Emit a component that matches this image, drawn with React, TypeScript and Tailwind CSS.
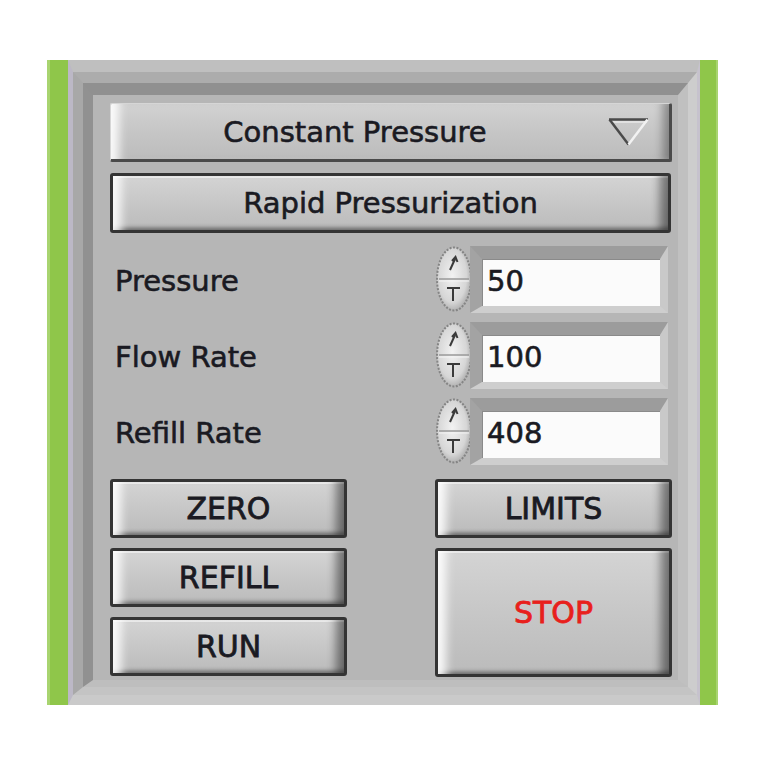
import { clsx } from "clsx"

const font = "font-['DejaVu_Sans','Liberation_Sans',sans-serif]"
const ink = "text-[#1a1a22] [-webkit-text-stroke:0.6px_#1a1a22]"
const btnInk = "text-[30px] text-[#1a1a22] [-webkit-text-stroke:0.8px_#1a1a22]"

function Bevel({ children, className }: { children: React.ReactNode; className?: string }) {
    return (
        <div
            className={clsx(
                "flex items-center justify-center rounded-[3px] border-[3px] border-[#343434] bg-gradient-to-b from-[#d4d4d4] via-[#c7c7c7] to-[#bbbbbb]",
                "shadow-[inset_14px_0_10px_-6px_rgba(255,255,255,0.9),inset_-14px_0_10px_-6px_rgba(0,0,0,0.45),inset_0_-5px_4px_-3px_rgba(0,0,0,0.5),inset_0_2px_0_rgba(255,255,255,0.6)]",
                className
            )}
        >
            {children}
        </div>
    )
}

function DownArrow() {
    return (
        <svg width="41" height="28" viewBox="0 0 41 28">
            <line x1="1" y1="1.5" x2="40" y2="1.5" stroke="#4a4a4a" strokeWidth="2.5" />
            <line x1="2" y1="4" x2="39" y2="4" stroke="#e8e8e8" strokeWidth="1.5" />
            <line x1="1.5" y1="1.5" x2="20.5" y2="26.5" stroke="#4a4a4a" strokeWidth="2.5" />
            <line x1="39.5" y1="1.5" x2="20.5" y2="26.5" stroke="#f2f2f2" strokeWidth="2.5" />
        </svg>
    )
}

function Spinner() {
    return (
        <svg width="38" height="66" viewBox="0 0 38 66" className="shrink-0">
            <defs>
                <radialGradient id="spin" cx="45%" cy="45%" r="60%">
                    <stop offset="0%" stopColor="#f2f2f2" />
                    <stop offset="70%" stopColor="#d6d6d6" />
                    <stop offset="100%" stopColor="#a6a6a6" />
                </radialGradient>
            </defs>
            <ellipse cx="19" cy="33" rx="17" ry="31.5" fill="url(#spin)" stroke="#858585" strokeWidth="2" strokeDasharray="2 1.5" />
            <line x1="4" y1="33" x2="34" y2="33" stroke="#9a9a9a" strokeWidth="1.5" />
            <line x1="4" y1="35" x2="34" y2="35" stroke="#f4f4f4" strokeWidth="1" />
            {/* up arrow */}
            <path d="M15 24 L20 13 M17 15 L20.5 11 L22.5 16" fill="none" stroke="#3a3a3a" strokeWidth="2" />
            {/* down arrow */}
            <path d="M12 42 H25 M18 42 V55" fill="none" stroke="#3a3a3a" strokeWidth="2" />
        </svg>
    )
}

function NumRow({ label, value }: { label: string; value: string }) {
    return (
        <div className="flex h-[76px] items-center">
            <div className={clsx("w-[325px] pt-[6px] pl-[5px] text-[29px]", ink)}>{label}</div>
            <Spinner />
            <div className="-ml-[3px] h-[67px] w-[198px] border-t-[13px] border-r-[8px] border-b-[7px] border-l-[12px] border-t-[#9c9c9c] border-r-[#c9c9c9] border-b-[#cecece] border-l-[#a3a3a3]">
                <div className={clsx("flex h-full items-center bg-[#fbfbfb] pl-[5px] text-[29px] shadow-[inset_1px_1px_0_#8a8a8a]", ink)}>
                    {value}
                </div>
            </div>
        </div>
    )
}

export default function App() {
    return (
        <div className={clsx("min-h-screen bg-white pt-[60px] pl-[47px]", font)}>
            <div className="flex h-[645px] w-[671px]">
                <div className="w-[21px] bg-[#8fc64a] shadow-[inset_3px_0_0_#a8d470]" />

                {/* bevelled frame */}
                <div className="w-[632px] border-t-[12px] border-r-[3px] border-b-[10px] border-l-[5px] border-t-[#bfbfbf] border-r-[#c6c2cd] border-b-[#cacaca] border-l-[#bcb8c6]">
                    <div className="h-full border-t-[11px] border-r-[9px] border-b-[8px] border-l-[10px] border-t-[#acacac] border-r-[#cdcdcd] border-b-[#c4c4c4] border-l-[#a8a8a8]">
                        <div className="h-full border-t-[12px] border-r-[10px] border-b-[7px] border-l-[10px] border-t-[#909090] border-r-[#c0c0c0] border-b-[#bebebe] border-l-[#919191]">
                            <div className="flex h-full flex-col bg-[#b6b6b6] pt-[8px] pr-[6px] pb-[3px] pl-[17px]">
                                {/* mode selector */}
                                <div className="flex h-[59px] w-[562px] items-center rounded-[2px] border-t border-r-[3px] border-b-[3px] border-l border-t-[#d6d6d6] border-r-[#4a4a4a] border-b-[#4a4a4a] border-l-[#d6d6d6] bg-gradient-to-b from-[#d2d2d2] via-[#c6c6c6] to-[#bcbcbc] shadow-[inset_14px_0_10px_-6px_rgba(255,255,255,0.9),inset_-12px_0_10px_-6px_rgba(0,0,0,0.35)]">
                                    <span className={clsx("w-[488px] pt-[2px] text-center text-[29px]", ink)}>Constant Pressure</span>
                                    <span className="ml-[9px] flex">
                                        <DownArrow />
                                    </span>
                                </div>

                                <Bevel className="mt-[11px] h-[60px] w-[561px]">
                                    <span className={clsx("pt-[2px] text-[29px]", ink)}>Rapid Pressurization</span>
                                </Bevel>

                                <div className="mt-[8px] flex flex-col">
                                    <NumRow label="Pressure" value="50" />
                                    <NumRow label="Flow Rate" value="100" />
                                    <NumRow label="Refill Rate" value="408" />
                                </div>

                                <div className="mt-[10px] grid grid-cols-[237px_237px] gap-x-[88px]">
                                    <div className="flex flex-col gap-[10px]">
                                        <Bevel className="h-[59px]">
                                            <span className={btnInk}>ZERO</span>
                                        </Bevel>
                                        <Bevel className="h-[59px]">
                                            <span className={btnInk}>REFILL</span>
                                        </Bevel>
                                        <Bevel className="h-[59px]">
                                            <span className={btnInk}>RUN</span>
                                        </Bevel>
                                    </div>
                                    <div className="flex flex-col gap-[10px]">
                                        <Bevel className="h-[59px]">
                                            <span className={btnInk}>LIMITS</span>
                                        </Bevel>
                                        <Bevel className="h-[129px]">
                                            <span className="text-[30px] text-[#e8201c] [-webkit-text-stroke:0.8px_#e8201c]">STOP</span>
                                        </Bevel>
                                    </div>
                                </div>
                            </div>
                        </div>
                    </div>
                </div>

                <div className="w-[18px] bg-[#8fc64a] shadow-[inset_-2px_0_0_#a8d470]" />
            </div>
        </div>
    )
}
